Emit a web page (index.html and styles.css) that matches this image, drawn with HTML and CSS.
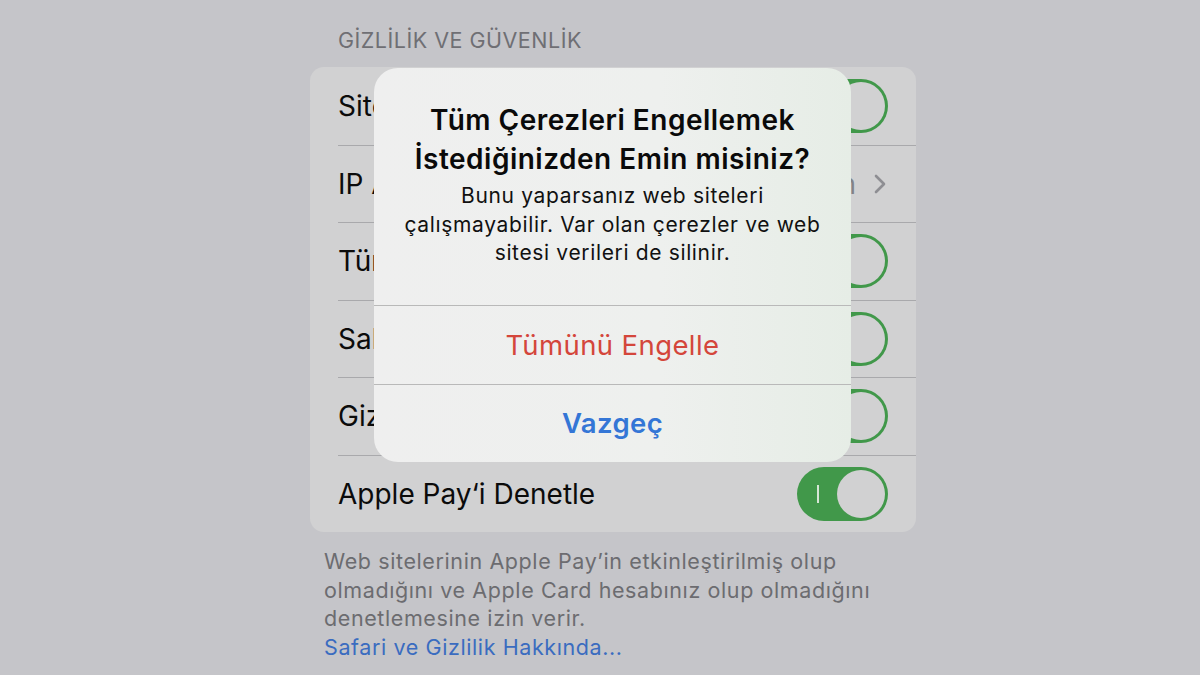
FILE: index.html
```html
<!DOCTYPE html>
<html lang="tr">

<head>
    <meta charset="UTF-8" />
    <meta name="viewport" content="width=device-width, initial-scale=1.0" />
    <title>Safari</title>
    <link rel="stylesheet" href="styles.css">
</head>

<body>

<main class="settings">
    <h2 class="settings__header">GİZLİLİK VE GÜVENLİK</h2>

    <div class="settings__group">
        <div class="settings__row">
            <div class="settings__row-inner">
                <span class="settings__label">Siteler Arası İzlemeyi Engelle</span>
                <span class="toggle"><span class="toggle__mark"></span><span class="toggle__knob"></span></span>
            </div>
        </div>
        <div class="settings__row">
            <div class="settings__row-inner">
                <span class="settings__label">IP Adresini Gizle</span>
                <span class="settings__value">İzleyicilerden</span>
                <svg class="settings__chevron" width="12" height="20" viewBox="0 0 12 20">
                    <path d="M2 2 L10 10 L2 18" fill="none" stroke="#8e8e93" stroke-width="2.6" stroke-linecap="round" stroke-linejoin="round"/>
                </svg>
            </div>
        </div>
        <div class="settings__row">
            <div class="settings__row-inner">
                <span class="settings__label">Tüm Çerezleri Engelle</span>
                <span class="toggle"><span class="toggle__mark"></span><span class="toggle__knob"></span></span>
            </div>
        </div>
        <div class="settings__row">
            <div class="settings__row-inner">
                <span class="settings__label">Sahte Web Sitesi Uyarısı</span>
                <span class="toggle"><span class="toggle__mark"></span><span class="toggle__knob"></span></span>
            </div>
        </div>
        <div class="settings__row">
            <div class="settings__row-inner">
                <span class="settings__label">Gizlilik Koruyan Reklam Ölçümü</span>
                <span class="toggle"><span class="toggle__mark"></span><span class="toggle__knob"></span></span>
            </div>
        </div>
        <div class="settings__row">
            <div class="settings__row-inner">
                <span class="settings__label">Apple Pay‘i Denetle</span>
                <span class="toggle"><span class="toggle__mark"></span><span class="toggle__knob"></span></span>
            </div>
        </div>
    </div>

    <p class="settings__footer">
        Web sitelerinin Apple Pay’in etkinleştirilmiş olup<br>
        olmadığını ve Apple Card hesabınız olup olmadığını<br>
        denetlemesine izin verir.<br>
        <a class="settings__link" href="#">Safari ve Gizlilik Hakkında...</a>
    </p>
</main>

<div class="alert">
    <div class="alert__body">
        <h3 class="alert__title">Tüm Çerezleri Engellemek<br>İstediğinizden Emin misiniz?</h3>
        <p class="alert__text">Bunu yaparsanız web siteleri<br>çalışmayabilir. Var olan çerezler ve web<br>sitesi verileri de silinir.</p>
    </div>
    <button class="alert__btn alert__btn--danger">Tümünü Engelle</button>
    <button class="alert__btn alert__btn--cancel">Vazgeç</button>
</div>

</body>
</html>
```

FILE: styles.css
```css
*,
*::before,
*::after {
    box-sizing: border-box;
}

html,
body {
    margin: 0;
    padding: 0;
}

body {
    font-family: 'Inter', 'Noto Sans', sans-serif;
    background: #c5c5c9;
    width: 1200px;
    height: 675px;
    overflow: hidden;
    position: relative;
}

.settings {
    width: 606px;
    margin-left: 310px;
}

.settings__header {
    margin: 0;
    padding: 27px 0 0 28px;
    height: 67px;
    font-size: 21.5px;
    font-weight: 400;
    line-height: 26px;
    letter-spacing: 0.5px;
    color: #6f6f74;
}

.settings__group {
    background: #d1d1d2;
    border-radius: 14px;
    overflow: hidden;
}

.settings__row {
    padding-left: 28px;
}

.settings__row-inner {
    display: flex;
    align-items: center;
    height: 77.5px;
    padding-right: 28px;
    border-top: 1px solid #a9a9ac;
}

.settings__row:first-child .settings__row-inner {
    border-top: none;
}

.settings__label {
    flex: 1;
    font-size: 28px;
    color: #0b0b0b;
    white-space: nowrap;
    overflow: hidden;
}

.settings__value {
    font-size: 28px;
    color: #838387;
    margin-right: 18px;
}

.settings__chevron {
    flex-shrink: 0;
    margin-right: 2px;
}

.toggle {
    position: relative;
    flex-shrink: 0;
    width: 91px;
    height: 54px;
    border-radius: 27px;
    background: #41984a;
}

.toggle__mark {
    position: absolute;
    left: 20px;
    top: 18px;
    width: 2px;
    height: 18px;
    background: #d6e6d6;
}

.toggle__knob {
    position: absolute;
    right: 3px;
    top: 3px;
    width: 48px;
    height: 48px;
    border-radius: 50%;
    background: #d1d1d2;
}

.settings__footer {
    margin: 15px 0 0;
    padding-left: 14px;
    font-size: 21.5px;
    line-height: 28.5px;
    letter-spacing: 0.6px;
    color: #6c6c70;
    white-space: nowrap;
}

.settings__link {
    color: #3a6cc0;
    text-decoration: none;
}

/* alert sheet over the dimmed list */
.alert {
    position: absolute;
    left: 374px;
    top: 68px;
    width: 477px;
    border-radius: 24px;
    overflow: hidden;
    background: linear-gradient(90deg, #efefef 0%, #eef0ee 60%, #e6ede6 100%);
    display: flex;
    flex-direction: column;
}

.alert__body {
    padding: 33px 10px 0;
    height: 237px;
    text-align: center;
    white-space: nowrap;
}

.alert__title {
    margin: 0 0 3px;
    font-size: 28px;
    font-weight: 600;
    line-height: 39px;
    letter-spacing: 0.5px;
    color: #0a0a0a;
}

.alert__text {
    margin: 0;
    font-size: 21px;
    line-height: 28.5px;
    letter-spacing: 0.65px;
    color: #111;
}

.alert__btn {
    height: 78.5px;
    border: none;
    border-top: 1px solid #b9b9b9;
    background: transparent;
    font-family: inherit;
    font-size: 27.5px;
    letter-spacing: 0.4px;
}

.alert__btn--danger {
    color: #d4463b;
}

.alert__btn--cancel {
    color: #3476d6;
    font-weight: 600;
}
```
